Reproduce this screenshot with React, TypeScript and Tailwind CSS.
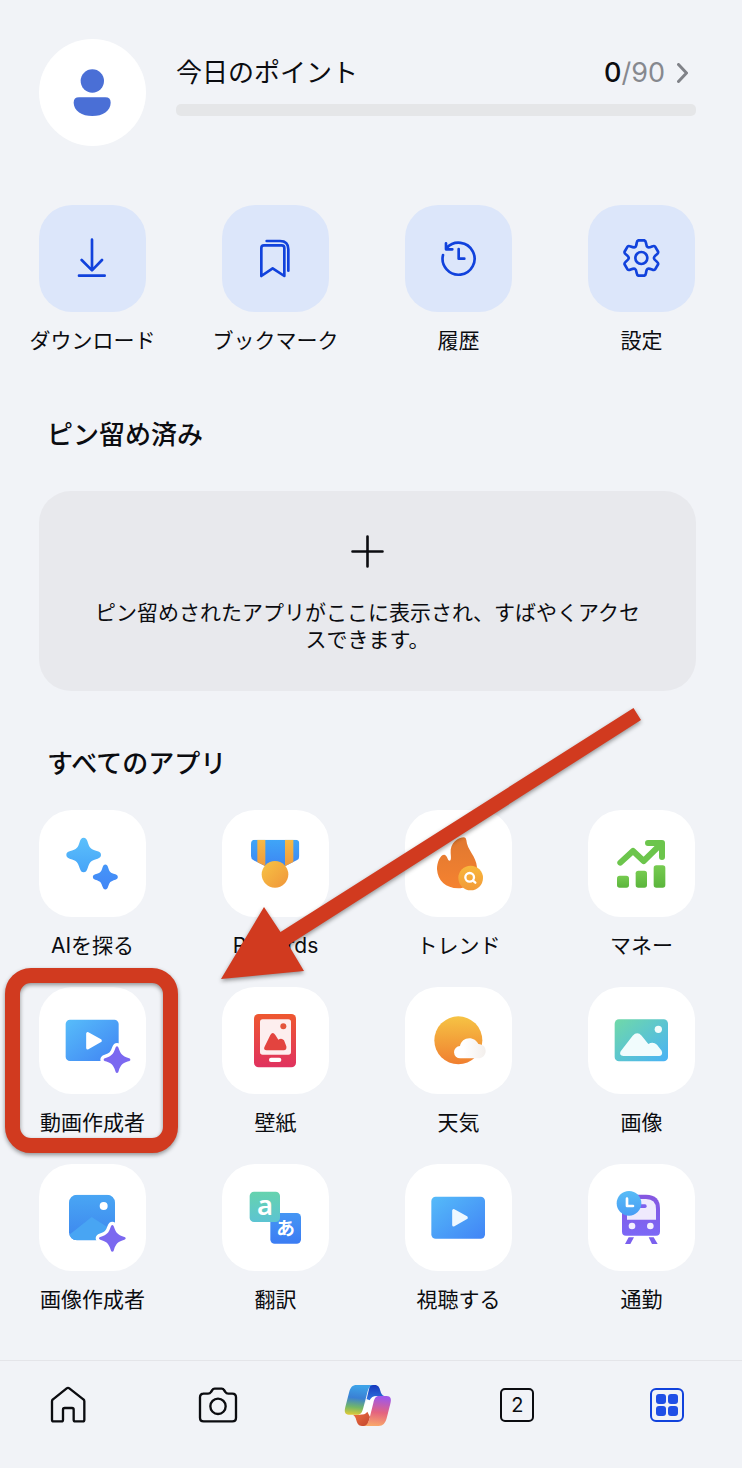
import React from 'react';

type Item = {
  label: string;
  icon: React.ReactNode;
  highlighted?: boolean;
};

const BLOB_STAR =
  'M0-52c6 0 9 4 11 10c7 22 9 24 31 31c6 2 10 5 10 11c0 6-4 9-10 11c-22 7-24 9-31 31c-2 6-5 10-11 10c-6 0-9-4-11-10c-7-22-9-24-31-31c-6-2-10-5-10-11c0-6 4-9 10-11c22-7 24-9 31-31c2-6 5-10 11-10z';

const SHARP_STAR =
  'M0-40c3 0 4 3 5 6c6 18 11 23 29 29c3 1 6 2 6 5c0 3-3 4-6 5c-18 6-23 11-29 29c-1 3-2 6-5 6c-3 0-4-3-5-6c-6-18-11-23-29-29c-3-1-6-2-6-5c0-3 3-4 6-5c18-6 23-11 29-29c1-3 2-6 5-6z';

// One gear tooth and the valley after it, turned six times around the centre
const gearPath = () => {
  const turn = (x: number, y: number, deg: number) => {
    const a = (deg * Math.PI) / 180;
    const px = 160 + x * Math.cos(a) - y * Math.sin(a);
    const py = 159 + x * Math.sin(a) + y * Math.cos(a);
    return `${px.toFixed(1)} ${py.toFixed(1)}`;
  };
  let d = '';
  for (let deg = 0; deg < 360; deg += 60) {
    d += `${deg === 0 ? 'M' : 'L'}${turn(-9, -53, deg)}`;
    d += `L${turn(9, -53, deg)}`;
    d += `Q${turn(13, -52, deg)} ${turn(14, -45, deg)}`;
    d += `C${turn(16, -31, deg)} ${turn(19, -29, deg)} ${turn(32, -34.6, deg)}`;
    d += `Q${turn(38.5, -37.3, deg)} ${turn(41.4, -34.3, deg)}`;
  }
  return `${d}Z`;
};

// Every tile drawing shares one 321-unit square that covers the whole tile
const TileIcon = ({ children }: { children: React.ReactNode }) => (
  <svg viewBox="0 0 321 321" className="h-full w-full" aria-hidden="true">
    {children}
  </svg>
);

const LineIcon = ({ children }: { children: React.ReactNode }) => (
  <TileIcon>
    <g fill="none" stroke="#1142dc" strokeWidth="8" strokeLinecap="round" strokeLinejoin="round">
      {children}
    </g>
  </TileIcon>
);

const Gradient = ({ id, from, to, diagonal }: { id: string; from: string; to: string; diagonal?: boolean }) => (
  <linearGradient id={id} x1="0" y1="0" x2={diagonal ? '1' : '0'} y2="1">
    <stop offset="0" stopColor={from} />
    <stop offset="1" stopColor={to} />
  </linearGradient>
);

const PurpleStar = ({ x, y }: { x: number; y: number }) => (
  <g transform={`translate(${x} ${y})`}>
    <path d={SHARP_STAR} fill="#fff" stroke="#fff" strokeWidth="20" strokeLinejoin="round" />
    <path d={SHARP_STAR} fill="#7b68f0" />
  </g>
);

const shortcuts: Item[] = [
  {
    label: 'ダウンロード',
    icon: (
      <LineIcon>
        <path d="M159 104V195M128 165L159 196L189 165M120 212H197" />
      </LineIcon>
    ),
  },
  {
    label: 'ブックマーク',
    icon: (
      <LineIcon>
        <path d="M118 213V129q0-8 8-8h53q8 0 8 8v84L152 190z" />
        <path d="M134 108h40q25 0 25 25v64" />
      </LineIcon>
    ),
  },
  {
    label: '履歴',
    icon: (
      <LineIcon>
        <path d="M114 150A48 48 0 1 0 125 129M123 115V133H142M161 132V161H178" />
      </LineIcon>
    ),
  },
  {
    label: '設定',
    icon: (
      <LineIcon>
        <path d={gearPath()} />
        <circle cx="160" cy="159" r="18" />
      </LineIcon>
    ),
  },
];

const apps: Item[] = [
  {
    label: 'AIを探る',
    icon: (
      <TileIcon>
        <Gradient id="starBig" from="#5cc0fb" to="#46a4f8" />
        <Gradient id="starSmall" from="#4596f8" to="#4285f6" />
        <path d={BLOB_STAR} transform="translate(134 135)" fill="url(#starBig)" />
        <path d={BLOB_STAR} transform="translate(199 201) scale(0.72)" fill="url(#starSmall)" />
      </TileIcon>
    ),
  },
  {
    label: 'Rewards',
    icon: (
      <TileIcon>
        <Gradient id="ribbon" from="#3fa9f8" to="#3d86f3" />
        <Gradient id="stripe" from="#f7bd45" to="#f09a3c" />
        <Gradient id="coin" from="#f7c444" to="#f0953a" diagonal />
        <clipPath id="ribbonShape">
          <path d="M99 89H220q12 0 12 12V138q0 9-8 13L190 168H129L95 151q-8-4-8-13V101q0-12 12-12z" />
        </clipPath>
        <g clipPath="url(#ribbonShape)">
          <rect x="80" y="80" width="160" height="90" fill="url(#ribbon)" />
          <rect x="106" y="80" width="24" height="90" fill="url(#stripe)" />
          <rect x="189" y="80" width="25" height="90" fill="url(#stripe)" />
        </g>
        <circle cx="159" cy="193" r="40" fill="url(#coin)" />
      </TileIcon>
    ),
  },
  {
    label: 'トレンド',
    icon: (
      <TileIcon>
        <Gradient id="flame" from="#e07830" to="#f58230" />
        <Gradient id="badge" from="#f8b83c" to="#f29a38" />
        <path
          d="M177 82C160 82 134 98 137 130C138 142 139 152 134 152C127 152 128 136 118 134C105 134 96 158 96 178C98 212 122 235 160 235C196 235 216 206 216 172C214 138 186 120 184 90Q183 82 177 82Z"
          fill="url(#flame)"
        />
        <circle cx="197" cy="204" r="37" fill="url(#badge)" />
        <g fill="none" stroke="#fff" strokeWidth="7" strokeLinecap="round">
          <circle cx="194" cy="202" r="13" />
          <path d="M204 212L211 218" />
        </g>
      </TileIcon>
    ),
  },
  {
    label: 'マネー',
    icon: (
      <TileIcon>
        <Gradient id="bars" from="#76cb50" to="#5bb53c" />
        <g fill="none" stroke="#6cc54c" strokeWidth="18" strokeLinecap="round" strokeLinejoin="round">
          <path d="M97 158L135 123L167 153L219 102" />
          <path d="M180 99H222V141" />
        </g>
        <rect x="87" y="197" width="36" height="36" rx="8" fill="url(#bars)" />
        <rect x="143" y="182" width="34" height="51" rx="8" fill="url(#bars)" />
        <rect x="197" y="166" width="35" height="67" rx="8" fill="url(#bars)" />
      </TileIcon>
    ),
  },
  {
    label: '動画作成者',
    highlighted: true,
    icon: (
      <TileIcon>
        <Gradient id="video" from="#57bdfa" to="#4083f3" diagonal />
        <rect x="80" y="98" width="159" height="124" rx="13" fill="url(#video)" />
        <path d="M146 140V183L184 161Z" fill="#fff" stroke="#fff" strokeWidth="9" strokeLinejoin="round" />
        <PurpleStar x={234} y={218} />
      </TileIcon>
    ),
  },
  {
    label: '壁紙',
    icon: (
      <TileIcon>
        <Gradient id="phone" from="#ee5730" to="#e0325f" />
        <rect x="96" y="81" width="126" height="160" rx="14" fill="url(#phone)" />
        <rect x="114" y="97" width="93" height="106" rx="8" fill="#fdeeee" />
        <circle cx="184" cy="118" r="9" fill="#e4553c" />
        <path d="M134 190q-10 0-7-9l18-37q7-12 15 0l9 14q10-6 17 2l7 18q2 12-8 12z" fill="#e3443f" />
        <rect x="141" y="212" width="37" height="13" rx="6" fill="#fff" />
      </TileIcon>
    ),
  },
  {
    label: '天気',
    icon: (
      <TileIcon>
        <Gradient id="sun" from="#f6c344" to="#f07f30" />
        <linearGradient id="cloud" x1="0" y1="0" x2="1" y2="0">
          <stop offset="0.3" stopColor="#fff" />
          <stop offset="1" stopColor="#f3efec" />
        </linearGradient>
        <circle cx="160" cy="160" r="72" fill="url(#sun)" />
        <path
          d="M166 214a18 18 0 0 1-1-37c3-14 14-23 28-23c12 0 22 7 27 17c14 1 22 9 22 21c0 12-9 22-22 22z"
          fill="url(#cloud)"
        />
      </TileIcon>
    ),
  },
  {
    label: '画像',
    icon: (
      <TileIcon>
        <Gradient id="photo" from="#70d9a8" to="#48b2f6" diagonal />
        <rect x="80" y="97" width="160" height="126" rx="13" fill="url(#photo)" />
        <circle cx="211" cy="127" r="11" fill="#f1fcfb" />
        <path
          d="M106 207q-14-2-8-14l36-47q14-14 27 0l20 25q14-8 26 2l14 18q5 13-7 16z"
          fill="#f1fcfd"
        />
      </TileIcon>
    ),
  },
  {
    label: '画像作成者',
    icon: (
      <TileIcon>
        <Gradient id="picture" from="#49a6f4" to="#3d86ee" />
        <clipPath id="pictureShape">
          <rect x="90" y="92" width="138" height="137" rx="24" />
        </clipPath>
        <g clipPath="url(#pictureShape)">
          <rect x="90" y="92" width="138" height="137" fill="url(#picture)" />
          <path d="M90 213L158 159L228 204V230H90Z" fill="#48a5f3" />
        </g>
        <circle cx="194" cy="126" r="12" fill="#fff" />
        <PurpleStar x={220} y={223} />
      </TileIcon>
    ),
  },
  {
    label: '翻訳',
    icon: (
      <TileIcon>
        <Gradient id="langA" from="#65d3ae" to="#5cc4d2" />
        <Gradient id="langB" from="#4596f4" to="#3b7cf3" />
        <rect x="145" y="147" width="92" height="92" rx="13" fill="url(#langB)" />
        <rect x="83" y="83" width="91" height="91" rx="13" fill="url(#langA)" />
        <g fill="#fff" textAnchor="middle">
          <text x="129" y="152" fontSize="82" fontWeight="600" className="font-['Noto_Sans',sans-serif]">
            a
          </text>
          <text x="191" y="214" fontSize="56" fontWeight="700" className="font-['Noto_Sans_CJK_JP',sans-serif]">
            あ
          </text>
        </g>
      </TileIcon>
    ),
  },
  {
    label: '視聴する',
    icon: (
      <TileIcon>
        <Gradient id="watch" from="#55bbf9" to="#4184f6" diagonal />
        <rect x="79" y="98" width="161" height="126" rx="13" fill="url(#watch)" />
        <path d="M146 140V183L184 161Z" fill="#eef8ff" stroke="#eef8ff" strokeWidth="9" strokeLinejoin="round" />
      </TileIcon>
    ),
  },
  {
    label: '通勤',
    icon: (
      <TileIcon>
        <Gradient id="train" from="#8657e0" to="#7b68f6" />
        <Gradient id="clock" from="#58bcf6" to="#489df5" />
        <path d="M102 92H174q42 0 42 42V203q0 12-12 12H114q-12 0-12-12z" fill="url(#train)" />
        <path d="M117 105H174q30 0 30 30V167H117z" fill="#efeafd" />
        <rect x="140" y="121" width="36" height="11" rx="5" fill="#7d62ee" />
        <circle cx="132" cy="186" r="10" fill="#f4f0fe" />
        <circle cx="187" cy="186" r="10" fill="#f4f0fe" />
        <path d="M122 220H138L127 240H111ZM182 220H197L209 240H192Z" fill="#7b60ee" />
        <circle cx="123" cy="118" r="37" fill="url(#clock)" />
        <path d="M117 104V126H135" fill="none" stroke="#fff" strokeWidth="8" strokeLinecap="round" strokeLinejoin="round" />
      </TileIcon>
    ),
  },
];

const Tile = ({ item, className }: { item: Item; className: string }) => (
  <button type="button" className="relative flex flex-col items-center gap-[15px]">
    <span className={`block size-[107px] shrink-0 rounded-[33px] ${className}`}>{item.icon}</span>
    <span className="text-[21px] leading-7 whitespace-nowrap">{item.label}</span>
    {item.highlighted && (
      <span className="absolute -top-[19px] -left-[34px] h-[185px] w-[173px] rounded-[26px] border-[15px] border-[#d13a1f] drop-shadow-[0_2px_2px_rgba(0,0,0,0.4)]" />
    )}
  </button>
);

const NavIcon = ({ children }: { children: React.ReactNode }) => (
  <svg
    viewBox="0 0 144 144"
    className="size-12"
    fill="none"
    stroke="#0b0c10"
    strokeWidth="7"
    strokeLinejoin="round"
    aria-hidden="true"
  >
    {children}
  </svg>
);

const CopilotLogo = () => (
  <svg viewBox="0 0 144 144" className="size-12" aria-hidden="true">
    <linearGradient id="copilotLeft" x1="0.1" y1="0" x2="0" y2="1">
      <stop offset="0" stopColor="#3da2e8" />
      <stop offset="0.4" stopColor="#3a80d4" />
      <stop offset="0.72" stopColor="#74b766" />
      <stop offset="1" stopColor="#e8cb33" />
    </linearGradient>
    <linearGradient id="copilotRight" x1="0.1" y1="0" x2="0" y2="1">
      <stop offset="0" stopColor="#a058e8" />
      <stop offset="0.5" stopColor="#e4637f" />
      <stop offset="1" stopColor="#fbae68" />
    </linearGradient>
    <Gradient id="copilotTop" from="#1638bd" to="#2f74de" />
    <Gradient id="copilotBottom" from="#f0703f" to="#c2452f" diagonal />
    <path d="M80 40H104L78 104H40Z" fill="#fff" />
    <path d="M78 12H92C103 12 106 19 109 29Q112 42 121 45H98C87 45 81 49 77 58L68 54Z" fill="url(#copilotTop)" />
    <path d="M70 135H54C43 135 40 128 37 118Q34 104 26 101H46C58 101 65 99 70 92L78 108Z" fill="url(#copilotBottom)" />
    <path
      d="M38 12H88C77 13 73 23 69 38L58 80C54 95 50 101 40 101H14C3 101 0 92 4 78L15 35C19 19 25 12 38 12Z"
      fill="url(#copilotLeft)"
    />
    <path
      d="M105 45H128C140 45 143 54 139 68L128 112C124 127 117 135 104 135H59C69 133 73 124 77 110L88 66C91 52 95 45 105 45Z"
      fill="url(#copilotRight)"
    />
  </svg>
);

const App = () => {
  return (
    <div
      lang="ja"
      className="flex min-h-screen flex-col overflow-x-hidden bg-[#f1f3f7] font-['Inter','Noto_Sans_CJK_JP',sans-serif] text-[#0b0c10]"
    >
      <main className="pt-[39px] pr-[46px] pb-[46px] pl-[39px]">
        {/* Profile and points */}
        <header className="flex gap-[30px]">
          <button type="button" aria-label="プロフィール" className="size-[107px] shrink-0 rounded-full bg-white">
            <TileIcon>
              <g fill="#4a6fd6">
                <circle cx="160" cy="126" r="35" />
                <path d="M120 175H199q16 0 16 16c0 24-24 40-55 40s-56-16-56-40q0-16 16-16z" />
              </g>
            </TileIcon>
          </button>
          <div className="grow pt-4">
            <a href="#points" className="flex h-9 items-center justify-between pr-2">
              <span className="text-[26px] leading-9">今日のポイント</span>
              <span className="flex items-center gap-3 text-[27px] leading-9 text-[#86888e]">
                <span>
                  <span className="font-medium text-[#0b0c10]">0</span>/90
                </span>
                <svg
                  viewBox="0 0 11 20"
                  className="h-5 w-[11px]"
                  fill="none"
                  stroke="#808288"
                  strokeWidth="3"
                  strokeLinecap="round"
                  strokeLinejoin="round"
                  aria-hidden="true"
                >
                  <path d="M1.5 1.5L9.5 10L1.5 18.5" />
                </svg>
              </span>
            </a>
            <div
              role="progressbar"
              aria-label="今日のポイント"
              aria-valuenow={0}
              aria-valuemax={90}
              className="mt-[13px] h-3 rounded-[5px] bg-[#e5e6e8]"
            />
          </div>
        </header>

        {/* Shortcuts */}
        <div className="mt-[59px] mr-px grid grid-cols-[repeat(4,107px)] justify-between">
          {shortcuts.map((item) => (
            <Tile key={item.label} item={item} className="bg-[#dce6fa]" />
          ))}
        </div>

        {/* Pinned */}
        <section>
          <h2 className="mt-16 pl-2 text-[26px] leading-8 font-medium">ピン留め済み</h2>
          <button
            type="button"
            className="mt-10 flex w-full flex-col items-center rounded-[32px] bg-[#e8e9ed] px-12 pt-11 pb-[38px]"
          >
            <svg
              viewBox="0 0 33 33"
              className="size-[33px]"
              stroke="#0b0c10"
              strokeWidth="2.6"
              strokeLinecap="round"
              aria-hidden="true"
            >
              <path d="M16.5 1.5V31.5M1.5 16.5H31.5" />
            </svg>
            <span className="mt-[31px] text-[21px] leading-[27px]">
              ピン留めされたアプリがここに表示され、すばやくアクセスできます。
            </span>
          </button>
        </section>

        {/* All apps */}
        <section>
          <h2 className="mt-[57px] pl-2 text-[26px] leading-8 font-medium">すべてのアプリ</h2>
          <div className="relative mt-[30px] mr-px grid grid-cols-[repeat(4,107px)] justify-between gap-y-[27px]">
            {apps.map((item) => (
              <Tile key={item.label} item={item} className="bg-white" />
            ))}
            <svg
              viewBox="0 0 421 272"
              className="pointer-events-none absolute -top-[103px] left-[181px] h-[272px] w-[421px] overflow-visible drop-shadow-[0_2px_2px_rgba(0,0,0,0.4)]"
              aria-hidden="true"
            >
              <path d="M413.5 1L421 13L68.5 238L84 264L1 272L44 200L60.5 225Z" fill="#d13a1f" />
            </svg>
          </div>
        </section>
      </main>

      {/* Bottom navigation */}
      <nav className="mt-auto flex justify-between border-t border-[#e4e5e9] pt-5 pr-[51px] pb-10 pl-11">
        <button type="button" aria-label="ホーム">
          <NavIcon>
            <path d="M68 22q4-3 8 0L118 55q3 2 3 6V116q0 5-5 5H94q-5 0-5-5V86q0-5-5-5H62q-5 0-5 5v30q0 5-5 5H29q-5 0-5-5V61q0-4 3-6z" />
          </NavIcon>
        </button>
        <button type="button" aria-label="カメラ">
          <NavIcon>
            <path d="M28 38H42q6 0 9-5l4-6q2-4 7-4H83q5 0 7 4l4 6q3 5 9 5H115q11 0 11 11V110q0 11-11 11H29q-11 0-11-11V49q0-11 11-11z" />
            <circle cx="72" cy="76" r="23" />
          </NavIcon>
        </button>
        <button type="button" aria-label="Copilot">
          <CopilotLogo />
        </button>
        <button type="button" aria-label="タブ" className="flex size-12 items-center justify-center">
          <span className="flex size-[34px] items-center justify-center rounded-[5px] border-2 border-[#0b0c10] text-xl leading-none">
            2
          </span>
        </button>
        <button type="button" aria-label="アプリ" className="flex size-12 items-center justify-center">
          <span className="grid size-[34px] grid-cols-2 place-content-center gap-0.5 rounded-md border-2 border-[#1142dc] p-1">
            <span className="aspect-square rounded-[3px] bg-[#1f4fe6]" />
            <span className="aspect-square rounded-[3px] bg-[#1f4fe6]" />
            <span className="aspect-square rounded-[3px] bg-[#1f4fe6]" />
            <span className="aspect-square rounded-[3px] bg-[#1f4fe6]" />
          </span>
        </button>
      </nav>
    </div>
  );
};

export default App;
